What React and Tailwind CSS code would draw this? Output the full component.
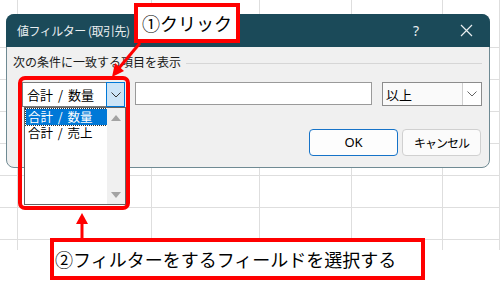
import React from "react";

const cols = [0, 1, 2, 3, 4, 5];
const rows = [0, 1, 2, 3, 4, 5, 6];

function Chevron({ color = "#555" }) {
  return (
    <svg width="10" height="6" viewBox="0 0 10 6">
      <polyline points="0.5,0.5 5,5 9.5,0.5" fill="none" stroke={color} strokeWidth="1" />
    </svg>
  );
}

export default function App() {
  return (
    <div className="relative w-[500px] h-[285px] bg-white overflow-hidden font-['Noto_Sans_CJK_JP','Noto_Sans',sans-serif] text-black">
      {/* spreadsheet grid */}
      <div className="absolute left-0 top-0 w-[500px] h-[218px] grid grid-cols-[18px_134px_108px_92px_91px_1fr] grid-rows-[48px_32px_32px_32px_32px_32px_32px_10px]">
        {rows.map((r) =>
          cols.map((c) => (
            <div key={r + "-" + c} className="border-r border-b border-[#dedede]" />
          ))
        )}
        {cols.map((c) => (
          <div key={"l-" + c} className="border-r border-[#dedede]" />
        ))}
      </div>

      {/* dialog */}
      <div className="absolute left-[6px] top-[14px] w-[484px] h-[154px] rounded-[8px] border border-[#6f8a93] bg-[#f0f0f0] flex flex-col">
        <div className="h-[33px] -mt-px -mx-px rounded-t-[8px] bg-[#1b4a59] flex items-center pl-[11px] pr-[17px] text-[#e9eef0]">
          <span className="text-[12px] tracking-[-0.5px] leading-none">値フィルター (取引先)</span>
          <div className="flex-1" />
          <span className="text-[14px] leading-none mr-[41px] font-['Noto_Sans',sans-serif]">?</span>
          <svg width="13" height="13" viewBox="0 0 13 13">
            <path d="M1 1 L12 12 M12 1 L1 12" stroke="#e9eef0" strokeWidth="1.2" />
          </svg>
        </div>
        <div className="flex-1 flex flex-col pl-[6px] pr-[7px] pt-[7px]">
          <div className="h-[16px] flex items-center gap-[5px]">
            <span className="text-[12px] leading-none text-[#1a1a1a]">次の条件に一致する項目を表示</span>
            <div className="flex-1 h-px bg-[#d6d6d6] mt-[2px]" />
          </div>
          <div className="mt-[12px] flex items-start">
            {/* combo with open list */}
            <div className="relative ml-[9px] w-[103px] h-[25px] bg-white border border-[#7a7a7a] flex">
              <div className="flex-1 flex items-center pl-[4px] text-[13px] leading-none [word-spacing:2px]">合計 / 数量</div>
              <div className="w-[19px] -my-px -mr-px bg-[#cce4f7] border border-[#0078d7] flex items-center justify-center">
                <Chevron color="#333" />
              </div>
              <div className="absolute left-[1px] top-[24px] w-[102px] h-[98px] bg-white border border-[#646464] flex">
                <div className="flex-1 pt-px pl-px flex flex-col">
                  <div className="h-[16px] bg-[#0078d7] text-white text-[12.5px] leading-none flex items-center pl-[2px] outline-1 outline-dotted outline-[#333] [word-spacing:2px]">
                    <span>合計 / 数量</span>
                  </div>
                  <div className="h-[16px] text-[12.5px] leading-none flex items-center pl-[2px] [word-spacing:2px]">
                    <span>合計 / 売上</span>
                  </div>
                </div>
                <div className="w-[18px] bg-[#f0f0f0] flex flex-col items-center justify-between pt-[7px] pb-[6px]">
                  <svg width="10" height="6" viewBox="0 0 10 6"><polygon points="0,6 5,0 10,6" fill="#a3a3a3" /></svg>
                  <svg width="10" height="6" viewBox="0 0 10 6"><polygon points="0,0 10,0 5,6" fill="#a3a3a3" /></svg>
                </div>
              </div>
            </div>
            <div className="ml-[10px] w-[237px] h-[23px] bg-white border border-[#9a9a9a]" />
            <div className="ml-[10px] w-[100px] h-[24px] bg-[#fafafa] border border-[#8c8c8c] flex">
              <div className="flex-1 flex items-center pl-[3px] text-[13px] leading-none">以上</div>
              <div className="w-[19px] border-l border-[#cfcfcf] bg-white flex items-center justify-center">
                <Chevron color="#666" />
              </div>
            </div>
          </div>
          <div className="mt-[22px] flex justify-end gap-[4px] pr-px">
            <div className="w-[89px] h-[27px] rounded-[4px] border border-[#1673c8] bg-[#fdfdfd] flex items-center justify-center text-[13px] leading-none font-['Noto_Sans',sans-serif]">OK</div>
            <div className="w-[79px] h-[27px] rounded-[4px] border border-[#d0d0d0] bg-[#fbfbfb] flex items-center justify-center text-[12px] tracking-[-1px] leading-none">キャンセル</div>
          </div>
        </div>
      </div>

      {/* red highlight around dropdown */}
      <div className="absolute left-[18px] top-[76px] w-[112px] h-[134px] border-4 border-[#ff0000] rounded-[7px]" />

      {/* callout 1 */}
      <div className="absolute left-[134px] top-[3px] w-[106px] h-[40px] border-4 border-[#ff0000] bg-white flex items-center pl-[4px] text-[18px] leading-none">
        ①クリック
      </div>

      {/* callout 2 */}
      <div className="absolute left-[50px] top-[238px] w-[375px] h-[42px] border-4 border-[#ff0000] bg-white flex items-center pl-[1px] text-[18px] leading-none">
        ②フィルターをするフィールドを選択する
      </div>

      {/* arrows */}
      <svg className="absolute left-0 top-0 pointer-events-none" width="500" height="285" viewBox="0 0 500 285">
        <line x1="140" y1="43" x2="119" y2="68" stroke="#ff0000" strokeWidth="3" />
        <polygon points="112,77 115,63 124,71" fill="#ff0000" />
        <line x1="82" y1="238" x2="82" y2="222" stroke="#ff0000" strokeWidth="3" />
        <polygon points="82,213 76,224 88,224" fill="#ff0000" />
      </svg>
    </div>
  );
}
